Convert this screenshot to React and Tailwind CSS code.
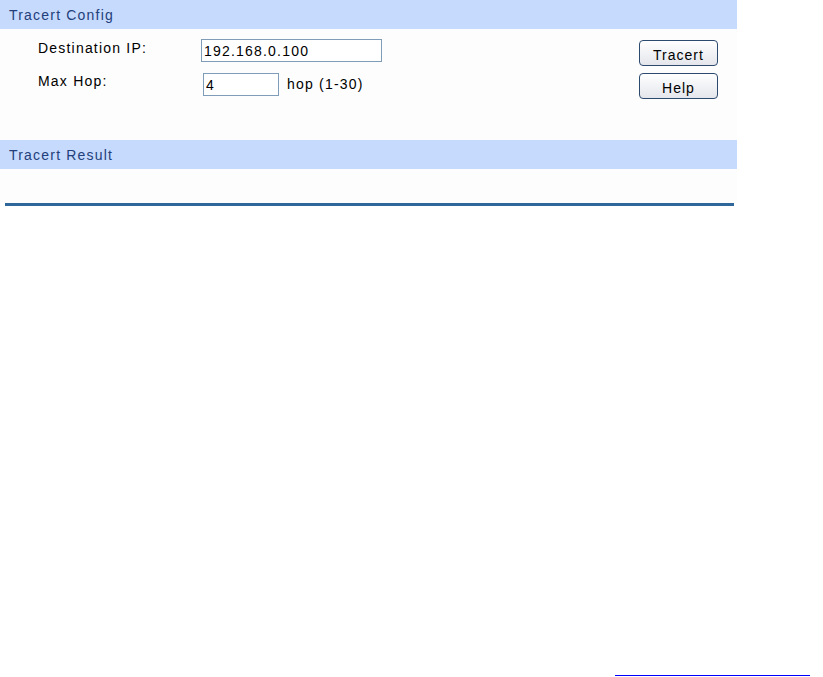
import React from 'react'

const font = { fontFamily: '"Liberation Sans", Arial, sans-serif' }

function Header({ title }) {
  return (
    <div className="h-[29px] w-[737px] bg-[#c6dafe] flex items-center pl-[9px] pt-[1px] text-[14px] tracking-[1.2px] text-[#23407a]">
      {title}
    </div>
  )
}

function Btn({ children }) {
  return (
    <button className="w-[79px] h-[26px] rounded-[4px] border border-[#2c4a6e] bg-gradient-to-b from-white to-[#e4e6ec] pt-[3px] text-[14px] tracking-[1px] text-black leading-none">
      {children}
    </button>
  )
}

export default function App() {
  const [ip, setIp] = React.useState('192.168.0.100')
  const [hop, setHop] = React.useState('4')

  return (
    <div className="w-[823px] h-[677px] bg-white relative" style={font}>
      <div className="w-[737px] bg-[#fdfdfd]">
        <Header title="Tracert Config" />
        <div className="flex h-[111px] pt-[10px]">
          <div className="flex flex-col gap-[10px] pl-[38px] pt-[-2px] -mt-[2px] w-[201px] text-[14px] tracking-[1.2px] text-black">
            <div className="h-[23px] flex items-center">Destination IP:</div>
            <div className="h-[23px] flex items-center">Max Hop:</div>
          </div>
          <div className="flex flex-col gap-[11px]">
            <input
              value={ip}
              onChange={e => setIp(e.target.value)}
              className="w-[181px] h-[23px] border border-[#7f9db9] px-[2px] text-[14px] tracking-[1.2px] text-black bg-white outline-none"
            />
            <div className="flex items-center ml-[2px]">
              <input
                value={hop}
                onChange={e => setHop(e.target.value)}
                className="w-[76px] h-[23px] border border-[#7f9db9] px-[2px] text-[14px] tracking-[1.2px] text-black bg-white outline-none"
              />
              <span className="ml-[8px] text-[14px] tracking-[1.2px] text-black">hop (1-30)</span>
            </div>
          </div>
          <div className="flex flex-col gap-[7px] ml-auto mr-[19px] pt-[1px]">
            <Btn>Tracert</Btn>
            <Btn>Help</Btn>
          </div>
        </div>
        <Header title="Tracert Result" />
        <div className="h-[34px]" />
      </div>
      <div className="ml-[5px] w-[729px] h-[3px] bg-[#30679a]" />
      <div className="absolute left-[615px] top-[675px] w-[195px] h-px bg-[#0000ff]" />
    </div>
  )
}
